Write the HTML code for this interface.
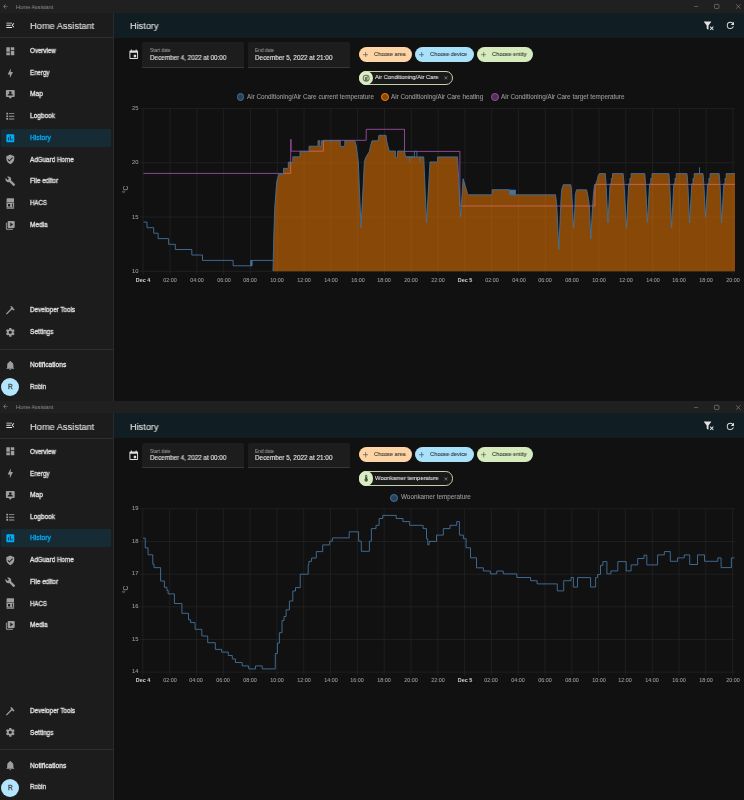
<!DOCTYPE html>
<html><head><meta charset="utf-8"><style>
html,body{margin:0;padding:0;background:#111111;width:744px;height:800px;overflow:hidden}
.panel{position:absolute;left:0;width:744px;height:401px;overflow:hidden}
.sb{position:absolute;left:0;top:12.5px;width:113px;height:389px;background:#1c1c1c}
.t{position:absolute;white-space:nowrap;font-family:"Liberation Sans",sans-serif;will-change:transform}
</style></head><body>
<div class="panel" style="top:0px">
<div style="position:absolute;left:114px;top:37.8px;width:630px;height:363px;background:#111111"></div>
<div class="sb"></div>
<svg style="position:absolute;left:4.5px;top:19.6px;width:10.6px;height:10.6px" viewBox="0 0 24 24"><path fill="#e1e1e1" d="M21,15.61L19.59,17L14.58,12L19.59,7L21,8.39L17.44,12L21,15.61M3,6H16V8H3V6M3,13V11H13V13H3M3,18V16H16V18H3Z"/></svg>
<div class="t" style="left:29.9px;top:21.15px;font-size:9.500px;line-height:9.500px;color:#e1e1e1;font-weight:400;-webkit-text-stroke:0.1px #e1e1e1;transform:scaleX(0.9742);transform-origin:0 50%">Home Assistant</div>
<div style="position:absolute;left:0;top:37.3px;width:113px;height:1px;background:#2e2e2e"></div>
<div style="position:absolute;left:0.8px;top:128.7px;width:109.8px;height:18px;border-radius:2px;background:#172b34"></div>
<svg style="position:absolute;left:4.9px;top:45.900000000000006px;width:10.6px;height:10.6px" viewBox="0 0 24 24"><path fill="#9e9e9e" d="M13,3V9H21V3M13,21H21V11H13M3,21H11V15H3M3,13H11V3H3V13Z"/></svg>
<div class="t" style="left:29.9px;top:48.10px;font-size:6.600px;line-height:6.600px;color:#e1e1e1;font-weight:400;-webkit-text-stroke:0.3px #e1e1e1;transform:scaleX(0.9380);transform-origin:0 50%">Overview</div>
<svg style="position:absolute;left:4.9px;top:67.8px;width:10.6px;height:10.6px" viewBox="0 0 24 24"><path fill="#9e9e9e" d="M11 15H6L13 1V9H18L11 23V15Z"/></svg>
<div class="t" style="left:29.9px;top:70.00px;font-size:6.600px;line-height:6.600px;color:#e1e1e1;font-weight:400;-webkit-text-stroke:0.3px #e1e1e1;transform:scaleX(0.9324);transform-origin:0 50%">Energy</div>
<svg style="position:absolute;left:4.9px;top:89.2px;width:10.6px;height:10.6px" viewBox="0 0 24 24"><path fill="#9e9e9e" d="M20,2H4A2,2 0 0,0 2,4V16A2,2 0 0,0 4,18H8L12,22L16,18H20A2,2 0 0,0 22,16V4A2,2 0 0,0 20,2M12,5A3,3 0 0,1 15,8A3,3 0 0,1 12,11A3,3 0 0,1 9,8A3,3 0 0,1 12,5M18,15H6V14C6,12 10,11 12,11C14,11 18,12 18,14V15Z"/></svg>
<div class="t" style="left:29.9px;top:91.40px;font-size:6.600px;line-height:6.600px;color:#e1e1e1;font-weight:400;-webkit-text-stroke:0.3px #e1e1e1;transform:scaleX(1.0125);transform-origin:0 50%">Map</div>
<svg style="position:absolute;left:4.9px;top:111.0px;width:10.6px;height:10.6px" viewBox="0 0 24 24"><path fill="#9e9e9e" d="M3,4H7V8H3V4M3,10H7V14H3V10M3,16H7V20H3V16M9,5V7H21V5H9M9,19H21V17H9V19M9,13H21V11H9V13Z"/></svg>
<div class="t" style="left:29.9px;top:113.10px;font-size:6.600px;line-height:6.600px;color:#e1e1e1;font-weight:400;-webkit-text-stroke:0.3px #e1e1e1;transform:scaleX(0.9872);transform-origin:0 50%">Logbook</div>
<svg style="position:absolute;left:4.9px;top:132.5px;width:10.6px;height:10.6px" viewBox="0 0 24 24"><path fill="#03a9f4" d="M19 3H5C3.9 3 3 3.9 3 5V19C3 20.1 3.9 21 5 21H19C20.1 21 21 20.1 21 19V5C21 3.9 20.1 3 19 3M9 17H7V10H9V17M13 17H11V7H13V17M17 17H15V13H17V17Z"/></svg>
<div class="t" style="left:29.9px;top:134.70px;font-size:6.600px;line-height:6.600px;color:#03a9f4;font-weight:400;-webkit-text-stroke:0.3px #03a9f4;transform:scaleX(1.0129);transform-origin:0 50%">History</div>
<svg style="position:absolute;left:4.9px;top:154.39999999999998px;width:10.6px;height:10.6px" viewBox="0 0 24 24"><path fill="#9e9e9e" d="M10,17L6,13L7.41,11.59L10,14.17L16.59,7.58L18,9M12,1L3,5V11C3,16.55 6.84,21.74 12,23C17.16,21.74 21,16.55 21,11V5L12,1Z"/></svg>
<div class="t" style="left:29.9px;top:156.60px;font-size:6.600px;line-height:6.600px;color:#e1e1e1;font-weight:400;-webkit-text-stroke:0.3px #e1e1e1;transform:scaleX(0.9530);transform-origin:0 50%">AdGuard Home</div>
<svg style="position:absolute;left:4.9px;top:176.1px;width:10.6px;height:10.6px" viewBox="0 0 24 24"><path fill="#9e9e9e" d="M22.7,19L13.6,9.9C14.5,7.6 14,4.9 12.1,3C10.1,1 7.1,0.6 4.7,1.7L9,6L6,9L1.6,4.7C0.4,7.1 0.9,10.1 2.9,12.1C4.8,14 7.5,14.5 9.8,13.6L18.9,22.7C19.3,23.1 19.9,23.1 20.3,22.7L22.6,20.4C23.1,20 23.1,19.3 22.7,19Z"/></svg>
<div class="t" style="left:29.9px;top:178.30px;font-size:6.600px;line-height:6.600px;color:#e1e1e1;font-weight:400;-webkit-text-stroke:0.3px #e1e1e1;transform:scaleX(0.9766);transform-origin:0 50%">File editor</div>
<svg style="position:absolute;left:0;top:197.75px;width:20px;height:12px" viewBox="0 0 20 12"><path fill="#9e9e9e" d="M6.7,0.2H13.9L14.1,4.6V10.7H6.5V4.6Z"/><path fill="#1c1c1c" d="M6.5,4.5H14.1V4.9H6.5Z M8.1,5.9H10.1V8.5H8.1Z M12.1,5.7H13V8.8H12.1Z M6.5,8.9H14.1V9.3H6.5Z"/><path fill="#5a5a5a" d="M7.2,9.6H8.4V10.3H7.2Z M9.2,9.6H11V10.3H9.2Z M12.6,9.6H13.6V10.3H12.6Z"/></svg>
<div class="t" style="left:29.9px;top:200.00px;font-size:6.600px;line-height:6.600px;color:#e1e1e1;font-weight:400;-webkit-text-stroke:0.3px #e1e1e1;transform:scaleX(0.9161);transform-origin:0 50%">HACS</div>
<svg style="position:absolute;left:4.9px;top:219.5px;width:10.6px;height:10.6px" viewBox="0 0 24 24"><path fill="#9e9e9e" d="M4,6H2V20A2,2 0 0,0 4,22H18V20H4V6M20,2H8A2,2 0 0,0 6,4V16A2,2 0 0,0 8,18H20A2,2 0 0,0 22,16V4A2,2 0 0,0 20,2M12,14.5V5.5L18,10L12,14.5Z"/></svg>
<div class="t" style="left:29.9px;top:221.70px;font-size:6.600px;line-height:6.600px;color:#e1e1e1;font-weight:400;-webkit-text-stroke:0.3px #e1e1e1;transform:scaleX(0.9790);transform-origin:0 50%">Media</div>
<svg style="position:absolute;left:4.9px;top:305.0px;width:10.6px;height:10.6px" viewBox="0 0 24 24"><path fill="#9e9e9e" d="M2 19.63L13.43 8.2L12.72 7.5L14.14 6.07L12 3.89C13.2 2.7 15.09 2.7 16.27 3.89L19.87 7.5L18.45 8.91H21.29L22 9.62L18.45 13.21L17.74 12.5V9.62L16.27 11.04L15.56 10.33L4.13 21.76L2 19.63Z"/></svg>
<div class="t" style="left:29.9px;top:307.20px;font-size:6.600px;line-height:6.600px;color:#e1e1e1;font-weight:400;-webkit-text-stroke:0.3px #e1e1e1;transform:scaleX(0.9575);transform-origin:0 50%">Developer Tools</div>
<svg style="position:absolute;left:4.9px;top:326.8px;width:10.6px;height:10.6px" viewBox="0 0 24 24"><path fill="#9e9e9e" d="M12,15.5A3.5,3.5 0 0,1 8.5,12A3.5,3.5 0 0,1 12,8.5A3.5,3.5 0 0,1 15.5,12A3.5,3.5 0 0,1 12,15.5M19.43,12.97C19.47,12.65 19.5,12.33 19.5,12C19.5,11.67 19.47,11.34 19.43,11L21.54,9.37C21.73,9.22 21.78,8.950 21.66,8.73L19.66,5.27C19.54,5.05 19.27,4.96 19.05,5.05L16.56,6.05C16.04,5.66 15.5,5.32 14.87,5.07L14.5,2.42C14.46,2.18 14.25,2 14,2H10C9.75,2 9.54,2.18 9.5,2.42L9.13,5.07C8.5,5.32 7.960,5.66 7.44,6.05L4.95,5.05C4.73,4.96 4.46,5.05 4.34,5.27L2.34,8.73C2.21,8.95 2.27,9.22 2.46,9.37L4.57,11C4.53,11.34 4.5,11.67 4.5,12C4.5,12.33 4.53,12.65 4.57,12.97L2.46,14.63C2.27,14.78 2.21,15.05 2.34,15.27L4.34,18.73C4.46,18.95 4.73,19.03 4.95,18.95L7.44,17.940C7.96,18.34 8.5,18.68 9.13,18.93L9.5,21.58C9.54,21.82 9.75,22 10,22H14C14.25,22 14.46,21.82 14.5,21.58L14.87,18.93C15.5,18.67 16.04,18.34 16.56,17.94L19.05,18.95C19.27,19.03 19.54,18.95 19.66,18.73L21.66,15.27C21.78,15.05 21.73,14.78 21.54,14.63L19.43,12.97Z"/></svg>
<div class="t" style="left:29.9px;top:329.00px;font-size:6.600px;line-height:6.600px;color:#e1e1e1;font-weight:400;-webkit-text-stroke:0.3px #e1e1e1;transform:scaleX(0.9812);transform-origin:0 50%">Settings</div>
<div style="position:absolute;left:0;top:348.6px;width:113px;height:1px;background:#2e2e2e"></div>
<svg style="position:absolute;left:4.9px;top:359.8px;width:10.6px;height:10.6px" viewBox="0 0 24 24"><path fill="#9e9e9e" d="M21,19V20H3V19L5,17V11C5,7.9 7.03,5.17 10,4.29C10,4.19 10,4.1 10,4A2,2 0 0,1 12,2A2,2 0 0,1 14,4C14,4.1 14,4.19 14,4.29C16.97,5.17 19,7.9 19,11V17L21,19M14,21A2,2 0 0,1 12,23A2,2 0 0,1 10,21"/></svg>
<div class="t" style="left:29.9px;top:362.40px;font-size:6.600px;line-height:6.600px;color:#e1e1e1;font-weight:400;-webkit-text-stroke:0.3px #e1e1e1;transform:scaleX(1.0098);transform-origin:0 50%">Notifications</div>
<div style="position:absolute;left:1.2px;top:378.1px;width:18px;height:18px;border-radius:50%;background:#b3e5fc"></div>
<div class="t" style="left:8.1px;top:384.10px;font-size:6.600px;line-height:6.600px;color:#3e4c53;font-weight:400;-webkit-text-stroke:0.3px #3e4c53">R</div>
<div class="t" style="left:29.9px;top:383.80px;font-size:6.600px;line-height:6.600px;color:#e1e1e1;font-weight:400;-webkit-text-stroke:0.3px #e1e1e1;transform:scaleX(0.9336);transform-origin:0 50%">Robin</div>
<div style="position:absolute;left:113px;top:12.5px;width:1px;height:388px;background:#2b2b2b"></div>
<div style="position:absolute;left:0;top:0;width:744px;height:12.5px;background:#202020"></div>
<svg style="position:absolute;left:2.3px;top:2.7px;width:7px;height:7px" viewBox="0 0 24 24"><path fill="#8a8a8a" d="M20,11V13H8L13.5,18.5L12.08,19.92L4.16,12L12.08,4.08L13.5,5.5L8,11H20Z"/></svg>
<div class="t" style="left:15.7px;top:4.55px;font-size:5.800px;line-height:5.800px;color:#8f8f8f;font-weight:400;transform:scaleX(0.9207);transform-origin:0 50%">Home Assistant</div>
<svg style="position:absolute;left:690px;top:0;width:54px;height:12px" viewBox="690 0 54 12"><path d="M693.9,6.5H698.3" stroke="#858585" stroke-width="0.55"/><rect x="714.45" y="4.35" width="4.5" height="4.1" rx="0.9" fill="none" stroke="#8e8e8e" stroke-width="0.6"/><path d="M736.1,4.3L740.5,8.7M740.5,4.3L736.1,8.7" stroke="#8e8e8e" stroke-width="0.6"/></svg>
<div style="position:absolute;left:114px;top:12.5px;width:630px;height:25.3px;background:#101e24"></div>
<div class="t" style="left:129.7px;top:21.00px;font-size:9.400px;line-height:9.400px;color:#e1e1e1;font-weight:400;-webkit-text-stroke:0.1px #e1e1e1;transform:scaleX(0.9779);transform-origin:0 50%">History</div>
<svg style="position:absolute;left:702.7px;top:19.8px;width:11px;height:11px" viewBox="0 0 24 24"><path fill="#e1e1e1" d="M14.76,20.83L17.6,18L14.76,15.17L16.17,13.76L19,16.57L21.83,13.76L23.24,15.17L20.43,18L23.24,20.83L21.83,22.24L19,19.4L16.17,22.24L14.76,20.83M12,12V19.88C12.04,20.18 11.94,20.5 11.71,20.71C11.32,21.1 10.69,21.1 10.3,20.71L8.29,18.7C8.06,18.47 7.96,18.16 8,17.87V12H7.97L2.21,4.62C1.87,4.19 1.95,3.56 2.38,3.22C2.57,3.08 2.78,3 3,3H17C17.22,3 17.43,3.08 17.62,3.22C18.05,3.56 18.13,4.19 17.79,4.62L12.03,12H12Z"/></svg>
<svg style="position:absolute;left:724.8px;top:20.3px;width:10.8px;height:10.8px" viewBox="0 0 24 24"><path fill="#e1e1e1" d="M17.65,6.35C16.2,4.9 14.21,4 12,4A8,8 0 0,0 4,12A8,8 0 0,0 12,20C15.73,20 18.84,17.45 19.73,14H17.65C16.83,16.33 14.61,18 12,18A6,6 0 0,1 6,12A6,6 0 0,1 12,6C13.66,6 15.14,6.690 16.22,7.78L13,11H20V4L17.65,6.35Z"/></svg>
<svg style="position:absolute;left:127.8px;top:49.1px;width:11.5px;height:11.5px" viewBox="0 0 24 24"><path fill="#e1e1e1" d="M19,19H5V8H19M16,1V3H8V1H6V3H5C3.89,3 3,3.89 3,5V19A2,2 0 0,0 5,21H19A2,2 0 0,0 21,19V5C21,3.89 20.1,3 19,3H18V1M17,12H12V17H17V12Z"/></svg>
<div style="position:absolute;left:142.3px;top:42px;width:101.89999999999998px;height:25.8px;background:#1d1d1d;border-radius:2px 2px 0 0;border-bottom:0.6px solid #383838;box-sizing:border-box"></div>
<div class="t" style="left:149.8px;top:49.15px;font-size:4.900px;line-height:4.900px;color:#9b9b9b;font-weight:400;-webkit-text-stroke:0.05px #9b9b9b;transform:scaleX(0.9696);transform-origin:0 50%">Start date</div>
<div class="t" style="left:149.8px;top:54.60px;font-size:6.400px;line-height:6.400px;color:#e1e1e1;font-weight:400;-webkit-text-stroke:0.12px #e1e1e1;transform:scaleX(0.9850);transform-origin:0 50%">December 4, 2022 at 00:00</div>
<div style="position:absolute;left:247.8px;top:42px;width:101.80000000000001px;height:25.8px;background:#1d1d1d;border-radius:2px 2px 0 0;border-bottom:0.6px solid #383838;box-sizing:border-box"></div>
<div class="t" style="left:255.3px;top:49.15px;font-size:4.900px;line-height:4.900px;color:#9b9b9b;font-weight:400;-webkit-text-stroke:0.05px #9b9b9b;transform:scaleX(0.9737);transform-origin:0 50%">End date</div>
<div class="t" style="left:255.3px;top:54.60px;font-size:6.400px;line-height:6.400px;color:#e1e1e1;font-weight:400;-webkit-text-stroke:0.12px #e1e1e1">December 5, 2022 at 21:00</div>
<div style="position:absolute;left:358.8px;top:46.9px;width:53.0px;height:14.9px;border-radius:7.45px;background:#fdd4a5"></div>
<svg style="position:absolute;left:362.6px;top:51.6px;width:5.4px;height:5.4px" viewBox="0 0 10 10"><path d="M5,0V10M0,5H10" stroke="rgba(0,0,0,0.55)" stroke-width="1.35"/></svg>
<div class="t" style="left:374.2px;top:51.50px;font-size:5.800px;line-height:5.800px;color:rgba(0,0,0,0.72);font-weight:400;-webkit-text-stroke:0.12px rgba(0,0,0,0.72);transform:scaleX(0.9515);transform-origin:0 50%">Choose area</div>
<div style="position:absolute;left:415px;top:46.9px;width:58.60000000000002px;height:14.9px;border-radius:7.45px;background:#a9e0fa"></div>
<svg style="position:absolute;left:418.8px;top:51.6px;width:5.4px;height:5.4px" viewBox="0 0 10 10"><path d="M5,0V10M0,5H10" stroke="rgba(0,0,0,0.55)" stroke-width="1.35"/></svg>
<div class="t" style="left:430.4px;top:51.50px;font-size:5.800px;line-height:5.800px;color:rgba(0,0,0,0.72);font-weight:400;-webkit-text-stroke:0.12px rgba(0,0,0,0.72);transform:scaleX(0.9695);transform-origin:0 50%">Choose device</div>
<div style="position:absolute;left:476.9px;top:46.9px;width:56.39999999999998px;height:14.9px;border-radius:7.45px;background:#d5eabd"></div>
<svg style="position:absolute;left:480.7px;top:51.6px;width:5.4px;height:5.4px" viewBox="0 0 10 10"><path d="M5,0V10M0,5H10" stroke="rgba(0,0,0,0.55)" stroke-width="1.35"/></svg>
<div class="t" style="left:492.29999999999995px;top:51.50px;font-size:5.800px;line-height:5.800px;color:rgba(0,0,0,0.72);font-weight:400;-webkit-text-stroke:0.12px rgba(0,0,0,0.72);transform:scaleX(0.9784);transform-origin:0 50%">Choose entity</div>
<div style="position:absolute;left:358.7px;top:70.9px;width:94px;height:14.4px;border-radius:7.2px;border:1.05px solid #c2d1a8;box-sizing:border-box;background:#1a1a1a"></div>
<div style="position:absolute;left:358.7px;top:70.9px;width:14.4px;height:14.4px;border-radius:50%;background:#d8edc2"></div>
<svg style="position:absolute;left:361.7px;top:73.9px;width:8.4px;height:8.4px" viewBox="0 0 24 24"><path fill="#6e7566" d="M16.95,16.95L14.83,14.83C15.55,14.1 16,13.1 16,12C16,11.26 15.79,10.57 15.43,10L17.6,7.81C18.5,9 19,10.43 19,12C19,13.93 18.22,15.68 16.95,16.95M12,5C13.57,5 15,5.5 16.19,6.4L14,8.56C13.43,8.2 12.74,8 12,8A4,4 0 0,0 8,12C8,13.1 8.45,14.1 9.17,14.83L7.05,16.95C5.78,15.68 5,13.930 5,12A7,7 0 0,1 12,5M12,2A10,10 0 0,0 2,12A10,10 0 0,0 12,22A10,10 0 0,0 22,12A10,10 0 0,0 12,2Z"/></svg>
<div class="t" style="left:375.2px;top:75.45px;font-size:5.900px;line-height:5.900px;color:#e1e1e1;font-weight:400;-webkit-text-stroke:0.08px #e1e1e1;transform:scaleX(0.9795);transform-origin:0 50%">Air Conditioning/Air Care</div>
<svg style="position:absolute;left:443.2px;top:75.4px;width:5.8px;height:5.8px" viewBox="0 0 24 24"><path fill="#9b9b9b" d="M19,6.41L17.59,5L12,10.59L6.41,5L5,6.41L10.59,12L5,17.59L6.41,19L12,13.41L17.59,19L19,17.59L13.41,12L19,6.41Z"/></svg>
<div style="position:absolute;left:236.5px;top:93.19999999999999px;width:7.8px;height:7.8px;border-radius:50%;box-sizing:border-box;border:1.3px solid #44739e;background:rgba(68,115,158,0.5)"></div>
<div class="t" style="left:246.7px;top:93.83px;font-size:6.330px;line-height:6.330px;color:#9b9b9b;font-weight:400;-webkit-text-stroke:0.08px #9b9b9b">Air Conditioning/Air Care current temperature</div>
<div style="position:absolute;left:381.1px;top:93.19999999999999px;width:7.8px;height:7.8px;border-radius:50%;box-sizing:border-box;border:1.3px solid #ff8100;background:rgba(255,129,0,0.5)"></div>
<div class="t" style="left:391.3px;top:93.83px;font-size:6.330px;line-height:6.330px;color:#9b9b9b;font-weight:400;-webkit-text-stroke:0.08px #9b9b9b">Air Conditioning/Air Care heating</div>
<div style="position:absolute;left:491.0px;top:93.19999999999999px;width:7.8px;height:7.8px;border-radius:50%;box-sizing:border-box;border:1.3px solid #984ea3;background:rgba(152,78,163,0.5)"></div>
<div class="t" style="left:501.2px;top:93.83px;font-size:6.330px;line-height:6.330px;color:#9b9b9b;font-weight:400;-webkit-text-stroke:0.08px #9b9b9b">Air Conditioning/Air Care target temperature</div>
<svg style="position:absolute;left:0;top:0;width:744px;height:400px" viewBox="0 0 744 400"><path d="M140,108.45H735" stroke="#252525" stroke-width="0.7"/>
<path d="M140,162.75H735" stroke="#252525" stroke-width="0.7"/>
<path d="M140,217.05H735" stroke="#252525" stroke-width="0.7"/>
<path d="M140,271.35H735" stroke="#252525" stroke-width="0.7"/>
<path d="M143.20,108.45V274.75" stroke="#252525" stroke-width="0.7"/>
<path d="M170.01,108.45V274.75" stroke="#252525" stroke-width="0.7"/>
<path d="M196.82,108.45V274.75" stroke="#252525" stroke-width="0.7"/>
<path d="M223.63,108.45V274.75" stroke="#252525" stroke-width="0.7"/>
<path d="M250.44,108.45V274.75" stroke="#252525" stroke-width="0.7"/>
<path d="M277.25,108.45V274.75" stroke="#252525" stroke-width="0.7"/>
<path d="M304.06,108.45V274.75" stroke="#252525" stroke-width="0.7"/>
<path d="M330.87,108.45V274.75" stroke="#252525" stroke-width="0.7"/>
<path d="M357.68,108.45V274.75" stroke="#252525" stroke-width="0.7"/>
<path d="M384.49,108.45V274.75" stroke="#252525" stroke-width="0.7"/>
<path d="M411.30,108.45V274.75" stroke="#252525" stroke-width="0.7"/>
<path d="M438.11,108.45V274.75" stroke="#252525" stroke-width="0.7"/>
<path d="M464.92,108.45V274.75" stroke="#252525" stroke-width="0.7"/>
<path d="M491.73,108.45V274.75" stroke="#252525" stroke-width="0.7"/>
<path d="M518.54,108.45V274.75" stroke="#252525" stroke-width="0.7"/>
<path d="M545.35,108.45V274.75" stroke="#252525" stroke-width="0.7"/>
<path d="M572.16,108.45V274.75" stroke="#252525" stroke-width="0.7"/>
<path d="M598.97,108.45V274.75" stroke="#252525" stroke-width="0.7"/>
<path d="M625.78,108.45V274.75" stroke="#252525" stroke-width="0.7"/>
<path d="M652.59,108.45V274.75" stroke="#252525" stroke-width="0.7"/>
<path d="M679.40,108.45V274.75" stroke="#252525" stroke-width="0.7"/>
<path d="M706.21,108.45V274.75" stroke="#252525" stroke-width="0.7"/>
<path d="M733.02,108.45V274.75" stroke="#252525" stroke-width="0.7"/><path d="M143.5,173.4H290.7V139.4H291.1V151.2H323.4V140.3H366.2V129.3H404.5V151.4H459.9V206H595V184.4H735" fill="none" stroke="#984ea3" stroke-width="0.9"/><path d="M273,271L273.8,236L274.8,207L275.8,193.6L276.7,182L278.7,174.3H283.5V168.4H288.3V162.2H292.8V156.8H300V151.4H309V146.2H318V140.7H319.8V146.4H321.4V140.7H340.3V146.4H344.8V140.7H354.8L356.2,145.6L356.9,150.4L358.3,161.5L361,227.5L364.4,161.5L365.8,157.3L369.3,151.8L370.6,145.6L372,140.8H378.2L378.9,135.3H386L386.5,140.1L387.8,145.6L389.2,151.1H395.4V157.3H397.5V151.1H404.4L405.6,156.9H423.75L426.5,222.5L430,161.9H437.5V156.9H457.5L460.6,216.9L463.1,178.75L465,185L467.5,193.75L468.5,194.8H492.1V189.7H509.7V194.8H555.6L556.8,206.1L558.8,249.5L560.7,206.1L561.3,194.8L561.8,189.2L563.3,184.7H570.8L571.4,189.2L572.5,206.1L573.6,228.1L575,206.1L575.3,194.8L576.5,189.8H586.6L587.7,194.8L589.4,206.1L590.8,238.8L592.6,206.1L593.4,194.8L594.5,184.7H595.6L597.3,179.6L598.4,175.1L599.5,173.6H605.3L606.1,183.8L607.9,222.6L610.1,183.8H611.3V178.3H612.5V173.6H623.2L624.0,183.8L626.5,228.2L628.7,183.8H629.9V178.3H631.1V173.6H644.8L645.6,183.8L647.4,222.3L649.6,183.8H650.8V178.3H652.0V173.6H668.9L669.7,183.8L671.6,227.6L673.8,183.8H675.0V178.3H676.2V173.6H687.0L687.8,183.8L689.6,222.9L691.8,183.8H693.0V178.3H694.2V173.6H703.0L703.8,183.8L705.5,217.0L707.7,183.8H708.9V178.3H710.1V173.6H719.2L720.0,183.8L721.6,222.6L723.8,183.8H725.0V178.3H726.2V173.6H735V271.3H273Z" fill="rgba(255,129,0,0.5)"/><path d="M143.6,222.1H147V227.7H153.7V233.2H158.1V238.6H168.6V244.3H175.3V249.5H191.8V255H202.5V260.4H233.1V265.8H250.9V260.4H273" fill="none" stroke="#44739e" stroke-width="0.9"/><path d="M273,271L273.8,236L274.8,207L275.8,193.6L276.7,182L278.7,174.3H283.5V168.4H288.3V162.2H292.8V156.8H300V151.4H309V146.2H318V140.7H319.8V146.4H321.4V140.7H340.3V146.4H344.8V140.7H354.8L356.2,145.6L356.9,150.4L358.3,161.5L361,227.5L364.4,161.5L365.8,157.3L369.3,151.8L370.6,145.6L372,140.8H378.2L378.9,135.3H386L386.5,140.1L387.8,145.6L389.2,151.1H395.4V157.3H397.5V151.1H404.4L405.6,156.9H423.75L426.5,222.5L430,161.9H437.5V156.9H457.5L460.6,216.9L463.1,178.75L465,185L467.5,193.75L468.5,194.8H492.1V189.7H509.7V194.8H555.6L556.8,206.1L558.8,249.5L560.7,206.1L561.3,194.8L561.8,189.2L563.3,184.7H570.8L571.4,189.2L572.5,206.1L573.6,228.1L575,206.1L575.3,194.8L576.5,189.8H586.6L587.7,194.8L589.4,206.1L590.8,238.8L592.6,206.1L593.4,194.8L594.5,184.7H595.6L597.3,179.6L598.4,175.1L599.5,173.6H605.3L606.1,183.8L607.9,222.6L610.1,183.8H611.3V178.3H612.5V173.6H623.2L624.0,183.8L626.5,228.2L628.7,183.8H629.9V178.3H631.1V173.6H644.8L645.6,183.8L647.4,222.3L649.6,183.8H650.8V178.3H652.0V173.6H668.9L669.7,183.8L671.6,227.6L673.8,183.8H675.0V178.3H676.2V173.6H687.0L687.8,183.8L689.6,222.9L691.8,183.8H693.0V178.3H694.2V173.6H703.0L703.8,183.8L705.5,217.0L707.7,183.8H708.9V178.3H710.1V173.6H719.2L720.0,183.8L721.6,222.6L723.8,183.8H725.0V178.3H726.2V173.6H735" fill="none" stroke="#44739e" stroke-width="0.9"/><rect x="509.7" y="189.7" width="6.2" height="5.1" fill="#44739e"/><path d="M406.25,156.9H414.4V151.25H416.9V156.9" fill="none" stroke="#44739e" stroke-width="0.9"/><path d="M409.7,156.9V161.9M420.2,156.9V161.9M699.5,173.6V167.4M252,260.4V265.8H250.9" fill="none" stroke="#44739e" stroke-width="0.9"/><rect x="250.4" y="260.2" width="1.8" height="5.6" fill="#44739e"/></svg><div class="t" style="left:110px;width:28.5px;text-align:right;top:106.15px;font-size:5.8px;line-height:5.8px;color:#9b9b9b;-webkit-text-stroke:0.08px #9b9b9b">25</div>
<div class="t" style="left:110px;width:28.5px;text-align:right;top:160.45px;font-size:5.8px;line-height:5.8px;color:#9b9b9b;-webkit-text-stroke:0.08px #9b9b9b">20</div>
<div class="t" style="left:110px;width:28.5px;text-align:right;top:214.75px;font-size:5.8px;line-height:5.8px;color:#9b9b9b;-webkit-text-stroke:0.08px #9b9b9b">15</div>
<div class="t" style="left:110px;width:28.5px;text-align:right;top:269.05px;font-size:5.8px;line-height:5.8px;color:#9b9b9b;-webkit-text-stroke:0.08px #9b9b9b">10</div>
<div class="t" style="left:128.20px;width:30px;text-align:center;top:277.65px;font-size:5.4px;line-height:5.6px;-webkit-text-stroke:0.08px #9b9b9b;color:#cfcfcf;font-weight:700">Dec 4</div>
<div class="t" style="left:155.01px;width:30px;text-align:center;top:277.65px;font-size:5.4px;line-height:5.6px;-webkit-text-stroke:0.08px #9b9b9b;color:#9b9b9b;font-weight:400">02:00</div>
<div class="t" style="left:181.82px;width:30px;text-align:center;top:277.65px;font-size:5.4px;line-height:5.6px;-webkit-text-stroke:0.08px #9b9b9b;color:#9b9b9b;font-weight:400">04:00</div>
<div class="t" style="left:208.63px;width:30px;text-align:center;top:277.65px;font-size:5.4px;line-height:5.6px;-webkit-text-stroke:0.08px #9b9b9b;color:#9b9b9b;font-weight:400">06:00</div>
<div class="t" style="left:235.44px;width:30px;text-align:center;top:277.65px;font-size:5.4px;line-height:5.6px;-webkit-text-stroke:0.08px #9b9b9b;color:#9b9b9b;font-weight:400">08:00</div>
<div class="t" style="left:262.25px;width:30px;text-align:center;top:277.65px;font-size:5.4px;line-height:5.6px;-webkit-text-stroke:0.08px #9b9b9b;color:#9b9b9b;font-weight:400">10:00</div>
<div class="t" style="left:289.06px;width:30px;text-align:center;top:277.65px;font-size:5.4px;line-height:5.6px;-webkit-text-stroke:0.08px #9b9b9b;color:#9b9b9b;font-weight:400">12:00</div>
<div class="t" style="left:315.87px;width:30px;text-align:center;top:277.65px;font-size:5.4px;line-height:5.6px;-webkit-text-stroke:0.08px #9b9b9b;color:#9b9b9b;font-weight:400">14:00</div>
<div class="t" style="left:342.68px;width:30px;text-align:center;top:277.65px;font-size:5.4px;line-height:5.6px;-webkit-text-stroke:0.08px #9b9b9b;color:#9b9b9b;font-weight:400">16:00</div>
<div class="t" style="left:369.49px;width:30px;text-align:center;top:277.65px;font-size:5.4px;line-height:5.6px;-webkit-text-stroke:0.08px #9b9b9b;color:#9b9b9b;font-weight:400">18:00</div>
<div class="t" style="left:396.30px;width:30px;text-align:center;top:277.65px;font-size:5.4px;line-height:5.6px;-webkit-text-stroke:0.08px #9b9b9b;color:#9b9b9b;font-weight:400">20:00</div>
<div class="t" style="left:423.11px;width:30px;text-align:center;top:277.65px;font-size:5.4px;line-height:5.6px;-webkit-text-stroke:0.08px #9b9b9b;color:#9b9b9b;font-weight:400">22:00</div>
<div class="t" style="left:449.92px;width:30px;text-align:center;top:277.65px;font-size:5.4px;line-height:5.6px;-webkit-text-stroke:0.08px #9b9b9b;color:#cfcfcf;font-weight:700">Dec 5</div>
<div class="t" style="left:476.73px;width:30px;text-align:center;top:277.65px;font-size:5.4px;line-height:5.6px;-webkit-text-stroke:0.08px #9b9b9b;color:#9b9b9b;font-weight:400">02:00</div>
<div class="t" style="left:503.54px;width:30px;text-align:center;top:277.65px;font-size:5.4px;line-height:5.6px;-webkit-text-stroke:0.08px #9b9b9b;color:#9b9b9b;font-weight:400">04:00</div>
<div class="t" style="left:530.35px;width:30px;text-align:center;top:277.65px;font-size:5.4px;line-height:5.6px;-webkit-text-stroke:0.08px #9b9b9b;color:#9b9b9b;font-weight:400">06:00</div>
<div class="t" style="left:557.16px;width:30px;text-align:center;top:277.65px;font-size:5.4px;line-height:5.6px;-webkit-text-stroke:0.08px #9b9b9b;color:#9b9b9b;font-weight:400">08:00</div>
<div class="t" style="left:583.97px;width:30px;text-align:center;top:277.65px;font-size:5.4px;line-height:5.6px;-webkit-text-stroke:0.08px #9b9b9b;color:#9b9b9b;font-weight:400">10:00</div>
<div class="t" style="left:610.78px;width:30px;text-align:center;top:277.65px;font-size:5.4px;line-height:5.6px;-webkit-text-stroke:0.08px #9b9b9b;color:#9b9b9b;font-weight:400">12:00</div>
<div class="t" style="left:637.59px;width:30px;text-align:center;top:277.65px;font-size:5.4px;line-height:5.6px;-webkit-text-stroke:0.08px #9b9b9b;color:#9b9b9b;font-weight:400">14:00</div>
<div class="t" style="left:664.40px;width:30px;text-align:center;top:277.65px;font-size:5.4px;line-height:5.6px;-webkit-text-stroke:0.08px #9b9b9b;color:#9b9b9b;font-weight:400">16:00</div>
<div class="t" style="left:691.21px;width:30px;text-align:center;top:277.65px;font-size:5.4px;line-height:5.6px;-webkit-text-stroke:0.08px #9b9b9b;color:#9b9b9b;font-weight:400">18:00</div>
<div class="t" style="left:718.02px;width:30px;text-align:center;top:277.65px;font-size:5.4px;line-height:5.6px;-webkit-text-stroke:0.08px #9b9b9b;color:#9b9b9b;font-weight:400">20:00</div>
<div class="t" style="left:122.6px;top:193.10px;font-size:6.4px;line-height:6.4px;color:#a0a0a0;-webkit-text-stroke:0.1px #a0a0a0;transform:rotate(-90deg);transform-origin:0 0">°C</div>
</div>
<div class="panel" style="top:400.6px">
<div style="position:absolute;left:114px;top:37.8px;width:630px;height:363px;background:#111111"></div>
<div class="sb"></div>
<svg style="position:absolute;left:4.5px;top:19.6px;width:10.6px;height:10.6px" viewBox="0 0 24 24"><path fill="#e1e1e1" d="M21,15.61L19.59,17L14.58,12L19.59,7L21,8.39L17.44,12L21,15.61M3,6H16V8H3V6M3,13V11H13V13H3M3,18V16H16V18H3Z"/></svg>
<div class="t" style="left:29.9px;top:21.15px;font-size:9.500px;line-height:9.500px;color:#e1e1e1;font-weight:400;-webkit-text-stroke:0.1px #e1e1e1;transform:scaleX(0.9742);transform-origin:0 50%">Home Assistant</div>
<div style="position:absolute;left:0;top:37.3px;width:113px;height:1px;background:#2e2e2e"></div>
<div style="position:absolute;left:0.8px;top:128.7px;width:109.8px;height:18px;border-radius:2px;background:#172b34"></div>
<svg style="position:absolute;left:4.9px;top:45.900000000000006px;width:10.6px;height:10.6px" viewBox="0 0 24 24"><path fill="#9e9e9e" d="M13,3V9H21V3M13,21H21V11H13M3,21H11V15H3M3,13H11V3H3V13Z"/></svg>
<div class="t" style="left:29.9px;top:48.10px;font-size:6.600px;line-height:6.600px;color:#e1e1e1;font-weight:400;-webkit-text-stroke:0.3px #e1e1e1;transform:scaleX(0.9380);transform-origin:0 50%">Overview</div>
<svg style="position:absolute;left:4.9px;top:67.8px;width:10.6px;height:10.6px" viewBox="0 0 24 24"><path fill="#9e9e9e" d="M11 15H6L13 1V9H18L11 23V15Z"/></svg>
<div class="t" style="left:29.9px;top:70.00px;font-size:6.600px;line-height:6.600px;color:#e1e1e1;font-weight:400;-webkit-text-stroke:0.3px #e1e1e1;transform:scaleX(0.9324);transform-origin:0 50%">Energy</div>
<svg style="position:absolute;left:4.9px;top:89.2px;width:10.6px;height:10.6px" viewBox="0 0 24 24"><path fill="#9e9e9e" d="M20,2H4A2,2 0 0,0 2,4V16A2,2 0 0,0 4,18H8L12,22L16,18H20A2,2 0 0,0 22,16V4A2,2 0 0,0 20,2M12,5A3,3 0 0,1 15,8A3,3 0 0,1 12,11A3,3 0 0,1 9,8A3,3 0 0,1 12,5M18,15H6V14C6,12 10,11 12,11C14,11 18,12 18,14V15Z"/></svg>
<div class="t" style="left:29.9px;top:91.40px;font-size:6.600px;line-height:6.600px;color:#e1e1e1;font-weight:400;-webkit-text-stroke:0.3px #e1e1e1;transform:scaleX(1.0125);transform-origin:0 50%">Map</div>
<svg style="position:absolute;left:4.9px;top:111.0px;width:10.6px;height:10.6px" viewBox="0 0 24 24"><path fill="#9e9e9e" d="M3,4H7V8H3V4M3,10H7V14H3V10M3,16H7V20H3V16M9,5V7H21V5H9M9,19H21V17H9V19M9,13H21V11H9V13Z"/></svg>
<div class="t" style="left:29.9px;top:113.10px;font-size:6.600px;line-height:6.600px;color:#e1e1e1;font-weight:400;-webkit-text-stroke:0.3px #e1e1e1;transform:scaleX(0.9872);transform-origin:0 50%">Logbook</div>
<svg style="position:absolute;left:4.9px;top:132.5px;width:10.6px;height:10.6px" viewBox="0 0 24 24"><path fill="#03a9f4" d="M19 3H5C3.9 3 3 3.9 3 5V19C3 20.1 3.9 21 5 21H19C20.1 21 21 20.1 21 19V5C21 3.9 20.1 3 19 3M9 17H7V10H9V17M13 17H11V7H13V17M17 17H15V13H17V17Z"/></svg>
<div class="t" style="left:29.9px;top:134.70px;font-size:6.600px;line-height:6.600px;color:#03a9f4;font-weight:400;-webkit-text-stroke:0.3px #03a9f4;transform:scaleX(1.0129);transform-origin:0 50%">History</div>
<svg style="position:absolute;left:4.9px;top:154.39999999999998px;width:10.6px;height:10.6px" viewBox="0 0 24 24"><path fill="#9e9e9e" d="M10,17L6,13L7.41,11.59L10,14.17L16.59,7.58L18,9M12,1L3,5V11C3,16.55 6.84,21.74 12,23C17.16,21.74 21,16.55 21,11V5L12,1Z"/></svg>
<div class="t" style="left:29.9px;top:156.60px;font-size:6.600px;line-height:6.600px;color:#e1e1e1;font-weight:400;-webkit-text-stroke:0.3px #e1e1e1;transform:scaleX(0.9530);transform-origin:0 50%">AdGuard Home</div>
<svg style="position:absolute;left:4.9px;top:176.1px;width:10.6px;height:10.6px" viewBox="0 0 24 24"><path fill="#9e9e9e" d="M22.7,19L13.6,9.9C14.5,7.6 14,4.9 12.1,3C10.1,1 7.1,0.6 4.7,1.7L9,6L6,9L1.6,4.7C0.4,7.1 0.9,10.1 2.9,12.1C4.8,14 7.5,14.5 9.8,13.6L18.9,22.7C19.3,23.1 19.9,23.1 20.3,22.7L22.6,20.4C23.1,20 23.1,19.3 22.7,19Z"/></svg>
<div class="t" style="left:29.9px;top:178.30px;font-size:6.600px;line-height:6.600px;color:#e1e1e1;font-weight:400;-webkit-text-stroke:0.3px #e1e1e1;transform:scaleX(0.9766);transform-origin:0 50%">File editor</div>
<svg style="position:absolute;left:0;top:197.75px;width:20px;height:12px" viewBox="0 0 20 12"><path fill="#9e9e9e" d="M6.7,0.2H13.9L14.1,4.6V10.7H6.5V4.6Z"/><path fill="#1c1c1c" d="M6.5,4.5H14.1V4.9H6.5Z M8.1,5.9H10.1V8.5H8.1Z M12.1,5.7H13V8.8H12.1Z M6.5,8.9H14.1V9.3H6.5Z"/><path fill="#5a5a5a" d="M7.2,9.6H8.4V10.3H7.2Z M9.2,9.6H11V10.3H9.2Z M12.6,9.6H13.6V10.3H12.6Z"/></svg>
<div class="t" style="left:29.9px;top:200.00px;font-size:6.600px;line-height:6.600px;color:#e1e1e1;font-weight:400;-webkit-text-stroke:0.3px #e1e1e1;transform:scaleX(0.9161);transform-origin:0 50%">HACS</div>
<svg style="position:absolute;left:4.9px;top:219.5px;width:10.6px;height:10.6px" viewBox="0 0 24 24"><path fill="#9e9e9e" d="M4,6H2V20A2,2 0 0,0 4,22H18V20H4V6M20,2H8A2,2 0 0,0 6,4V16A2,2 0 0,0 8,18H20A2,2 0 0,0 22,16V4A2,2 0 0,0 20,2M12,14.5V5.5L18,10L12,14.5Z"/></svg>
<div class="t" style="left:29.9px;top:221.70px;font-size:6.600px;line-height:6.600px;color:#e1e1e1;font-weight:400;-webkit-text-stroke:0.3px #e1e1e1;transform:scaleX(0.9790);transform-origin:0 50%">Media</div>
<svg style="position:absolute;left:4.9px;top:305.0px;width:10.6px;height:10.6px" viewBox="0 0 24 24"><path fill="#9e9e9e" d="M2 19.63L13.43 8.2L12.72 7.5L14.14 6.07L12 3.89C13.2 2.7 15.09 2.7 16.27 3.89L19.87 7.5L18.45 8.91H21.29L22 9.62L18.45 13.21L17.74 12.5V9.62L16.27 11.04L15.56 10.33L4.13 21.76L2 19.63Z"/></svg>
<div class="t" style="left:29.9px;top:307.20px;font-size:6.600px;line-height:6.600px;color:#e1e1e1;font-weight:400;-webkit-text-stroke:0.3px #e1e1e1;transform:scaleX(0.9575);transform-origin:0 50%">Developer Tools</div>
<svg style="position:absolute;left:4.9px;top:326.8px;width:10.6px;height:10.6px" viewBox="0 0 24 24"><path fill="#9e9e9e" d="M12,15.5A3.5,3.5 0 0,1 8.5,12A3.5,3.5 0 0,1 12,8.5A3.5,3.5 0 0,1 15.5,12A3.5,3.5 0 0,1 12,15.5M19.43,12.97C19.47,12.65 19.5,12.33 19.5,12C19.5,11.67 19.47,11.34 19.43,11L21.54,9.37C21.73,9.22 21.78,8.950 21.66,8.73L19.66,5.27C19.54,5.05 19.27,4.96 19.05,5.05L16.56,6.05C16.04,5.66 15.5,5.32 14.87,5.07L14.5,2.42C14.46,2.18 14.25,2 14,2H10C9.75,2 9.54,2.18 9.5,2.42L9.13,5.07C8.5,5.32 7.960,5.66 7.44,6.05L4.95,5.05C4.73,4.96 4.46,5.05 4.34,5.27L2.34,8.73C2.21,8.95 2.27,9.22 2.46,9.37L4.57,11C4.53,11.34 4.5,11.67 4.5,12C4.5,12.33 4.53,12.65 4.57,12.97L2.46,14.63C2.27,14.78 2.21,15.05 2.34,15.27L4.34,18.73C4.46,18.95 4.73,19.03 4.95,18.95L7.44,17.940C7.96,18.34 8.5,18.68 9.13,18.93L9.5,21.58C9.54,21.82 9.75,22 10,22H14C14.25,22 14.46,21.82 14.5,21.58L14.87,18.93C15.5,18.67 16.04,18.34 16.56,17.94L19.05,18.95C19.27,19.03 19.54,18.95 19.66,18.73L21.66,15.27C21.78,15.05 21.73,14.78 21.54,14.63L19.43,12.97Z"/></svg>
<div class="t" style="left:29.9px;top:329.00px;font-size:6.600px;line-height:6.600px;color:#e1e1e1;font-weight:400;-webkit-text-stroke:0.3px #e1e1e1;transform:scaleX(0.9812);transform-origin:0 50%">Settings</div>
<div style="position:absolute;left:0;top:348.6px;width:113px;height:1px;background:#2e2e2e"></div>
<svg style="position:absolute;left:4.9px;top:359.8px;width:10.6px;height:10.6px" viewBox="0 0 24 24"><path fill="#9e9e9e" d="M21,19V20H3V19L5,17V11C5,7.9 7.03,5.17 10,4.29C10,4.19 10,4.1 10,4A2,2 0 0,1 12,2A2,2 0 0,1 14,4C14,4.1 14,4.19 14,4.29C16.97,5.17 19,7.9 19,11V17L21,19M14,21A2,2 0 0,1 12,23A2,2 0 0,1 10,21"/></svg>
<div class="t" style="left:29.9px;top:362.40px;font-size:6.600px;line-height:6.600px;color:#e1e1e1;font-weight:400;-webkit-text-stroke:0.3px #e1e1e1;transform:scaleX(1.0098);transform-origin:0 50%">Notifications</div>
<div style="position:absolute;left:1.2px;top:378.1px;width:18px;height:18px;border-radius:50%;background:#b3e5fc"></div>
<div class="t" style="left:8.1px;top:384.10px;font-size:6.600px;line-height:6.600px;color:#3e4c53;font-weight:400;-webkit-text-stroke:0.3px #3e4c53">R</div>
<div class="t" style="left:29.9px;top:383.80px;font-size:6.600px;line-height:6.600px;color:#e1e1e1;font-weight:400;-webkit-text-stroke:0.3px #e1e1e1;transform:scaleX(0.9336);transform-origin:0 50%">Robin</div>
<div style="position:absolute;left:113px;top:12.5px;width:1px;height:388px;background:#2b2b2b"></div>
<div style="position:absolute;left:0;top:0;width:744px;height:12.5px;background:#202020"></div>
<svg style="position:absolute;left:2.3px;top:2.7px;width:7px;height:7px" viewBox="0 0 24 24"><path fill="#8a8a8a" d="M20,11V13H8L13.5,18.5L12.08,19.92L4.16,12L12.08,4.08L13.5,5.5L8,11H20Z"/></svg>
<div class="t" style="left:15.7px;top:4.55px;font-size:5.800px;line-height:5.800px;color:#8f8f8f;font-weight:400;transform:scaleX(0.9207);transform-origin:0 50%">Home Assistant</div>
<svg style="position:absolute;left:690px;top:0;width:54px;height:12px" viewBox="690 0 54 12"><path d="M693.9,6.5H698.3" stroke="#858585" stroke-width="0.55"/><rect x="714.45" y="4.35" width="4.5" height="4.1" rx="0.9" fill="none" stroke="#8e8e8e" stroke-width="0.6"/><path d="M736.1,4.3L740.5,8.7M740.5,4.3L736.1,8.7" stroke="#8e8e8e" stroke-width="0.6"/></svg>
<div style="position:absolute;left:114px;top:12.5px;width:630px;height:25.3px;background:#101e24"></div>
<div class="t" style="left:129.7px;top:21.00px;font-size:9.400px;line-height:9.400px;color:#e1e1e1;font-weight:400;-webkit-text-stroke:0.1px #e1e1e1;transform:scaleX(0.9779);transform-origin:0 50%">History</div>
<svg style="position:absolute;left:702.7px;top:19.8px;width:11px;height:11px" viewBox="0 0 24 24"><path fill="#e1e1e1" d="M14.76,20.83L17.6,18L14.76,15.17L16.17,13.76L19,16.57L21.83,13.76L23.24,15.17L20.43,18L23.24,20.83L21.83,22.24L19,19.4L16.17,22.24L14.76,20.83M12,12V19.88C12.04,20.18 11.94,20.5 11.71,20.71C11.32,21.1 10.69,21.1 10.3,20.71L8.29,18.7C8.06,18.47 7.96,18.16 8,17.87V12H7.97L2.21,4.62C1.87,4.19 1.95,3.56 2.38,3.22C2.57,3.08 2.78,3 3,3H17C17.22,3 17.43,3.08 17.62,3.22C18.05,3.56 18.13,4.19 17.79,4.62L12.03,12H12Z"/></svg>
<svg style="position:absolute;left:724.8px;top:20.3px;width:10.8px;height:10.8px" viewBox="0 0 24 24"><path fill="#e1e1e1" d="M17.65,6.35C16.2,4.9 14.21,4 12,4A8,8 0 0,0 4,12A8,8 0 0,0 12,20C15.73,20 18.84,17.45 19.73,14H17.65C16.83,16.33 14.61,18 12,18A6,6 0 0,1 6,12A6,6 0 0,1 12,6C13.66,6 15.14,6.690 16.22,7.78L13,11H20V4L17.65,6.35Z"/></svg>
<svg style="position:absolute;left:127.8px;top:49.1px;width:11.5px;height:11.5px" viewBox="0 0 24 24"><path fill="#e1e1e1" d="M19,19H5V8H19M16,1V3H8V1H6V3H5C3.89,3 3,3.89 3,5V19A2,2 0 0,0 5,21H19A2,2 0 0,0 21,19V5C21,3.89 20.1,3 19,3H18V1M17,12H12V17H17V12Z"/></svg>
<div style="position:absolute;left:142.3px;top:42px;width:101.89999999999998px;height:25.8px;background:#1d1d1d;border-radius:2px 2px 0 0;border-bottom:0.6px solid #383838;box-sizing:border-box"></div>
<div class="t" style="left:149.8px;top:49.15px;font-size:4.900px;line-height:4.900px;color:#9b9b9b;font-weight:400;-webkit-text-stroke:0.05px #9b9b9b;transform:scaleX(0.9696);transform-origin:0 50%">Start date</div>
<div class="t" style="left:149.8px;top:54.60px;font-size:6.400px;line-height:6.400px;color:#e1e1e1;font-weight:400;-webkit-text-stroke:0.12px #e1e1e1;transform:scaleX(0.9850);transform-origin:0 50%">December 4, 2022 at 00:00</div>
<div style="position:absolute;left:247.8px;top:42px;width:101.80000000000001px;height:25.8px;background:#1d1d1d;border-radius:2px 2px 0 0;border-bottom:0.6px solid #383838;box-sizing:border-box"></div>
<div class="t" style="left:255.3px;top:49.15px;font-size:4.900px;line-height:4.900px;color:#9b9b9b;font-weight:400;-webkit-text-stroke:0.05px #9b9b9b;transform:scaleX(0.9737);transform-origin:0 50%">End date</div>
<div class="t" style="left:255.3px;top:54.60px;font-size:6.400px;line-height:6.400px;color:#e1e1e1;font-weight:400;-webkit-text-stroke:0.12px #e1e1e1">December 5, 2022 at 21:00</div>
<div style="position:absolute;left:358.8px;top:46.9px;width:53.0px;height:14.9px;border-radius:7.45px;background:#fdd4a5"></div>
<svg style="position:absolute;left:362.6px;top:51.6px;width:5.4px;height:5.4px" viewBox="0 0 10 10"><path d="M5,0V10M0,5H10" stroke="rgba(0,0,0,0.55)" stroke-width="1.35"/></svg>
<div class="t" style="left:374.2px;top:51.50px;font-size:5.800px;line-height:5.800px;color:rgba(0,0,0,0.72);font-weight:400;-webkit-text-stroke:0.12px rgba(0,0,0,0.72);transform:scaleX(0.9515);transform-origin:0 50%">Choose area</div>
<div style="position:absolute;left:415px;top:46.9px;width:58.60000000000002px;height:14.9px;border-radius:7.45px;background:#a9e0fa"></div>
<svg style="position:absolute;left:418.8px;top:51.6px;width:5.4px;height:5.4px" viewBox="0 0 10 10"><path d="M5,0V10M0,5H10" stroke="rgba(0,0,0,0.55)" stroke-width="1.35"/></svg>
<div class="t" style="left:430.4px;top:51.50px;font-size:5.800px;line-height:5.800px;color:rgba(0,0,0,0.72);font-weight:400;-webkit-text-stroke:0.12px rgba(0,0,0,0.72);transform:scaleX(0.9695);transform-origin:0 50%">Choose device</div>
<div style="position:absolute;left:476.9px;top:46.9px;width:56.39999999999998px;height:14.9px;border-radius:7.45px;background:#d5eabd"></div>
<svg style="position:absolute;left:480.7px;top:51.6px;width:5.4px;height:5.4px" viewBox="0 0 10 10"><path d="M5,0V10M0,5H10" stroke="rgba(0,0,0,0.55)" stroke-width="1.35"/></svg>
<div class="t" style="left:492.29999999999995px;top:51.50px;font-size:5.800px;line-height:5.800px;color:rgba(0,0,0,0.72);font-weight:400;-webkit-text-stroke:0.12px rgba(0,0,0,0.72);transform:scaleX(0.9784);transform-origin:0 50%">Choose entity</div>
<div style="position:absolute;left:358.7px;top:70.9px;width:94px;height:14.4px;border-radius:7.2px;border:1.05px solid #c2d1a8;box-sizing:border-box;background:#1a1a1a"></div>
<div style="position:absolute;left:358.7px;top:70.9px;width:14.4px;height:14.4px;border-radius:50%;background:#d8edc2"></div>
<svg style="position:absolute;left:361.6px;top:73.8px;width:8.4px;height:8.4px" viewBox="0 0 24 24"><path fill="#4d5248" d="M15 13V5A3 3 0 0 0 9 5V13A5 5 0 1 0 15 13M12 4A1 1 0 0 1 13 5V8H11V5A1 1 0 0 1 12 4Z"/></svg>
<div class="t" style="left:375.2px;top:75.45px;font-size:5.900px;line-height:5.900px;color:#e1e1e1;font-weight:400;-webkit-text-stroke:0.08px #e1e1e1;transform:scaleX(0.9762);transform-origin:0 50%">Woonkamer temperature</div>
<svg style="position:absolute;left:443.2px;top:75.4px;width:5.8px;height:5.8px" viewBox="0 0 24 24"><path fill="#9b9b9b" d="M19,6.41L17.59,5L12,10.59L6.41,5L5,6.41L10.59,12L5,17.59L6.41,19L12,13.41L17.59,19L19,17.59L13.41,12L19,6.41Z"/></svg>
<div style="position:absolute;left:390.40000000000003px;top:93.19999999999999px;width:7.8px;height:7.8px;border-radius:50%;box-sizing:border-box;border:1.3px solid #44739e;background:rgba(68,115,158,0.5)"></div>
<div class="t" style="left:400.5px;top:93.83px;font-size:6.330px;line-height:6.330px;color:#9b9b9b;font-weight:400;-webkit-text-stroke:0.08px #9b9b9b">Woonkamer temperature</div>
<svg style="position:absolute;left:0;top:0;width:744px;height:400px" viewBox="0 0 744 400"><path d="M140,107.80H735" stroke="#252525" stroke-width="0.7"/>
<path d="M140,140.48H735" stroke="#252525" stroke-width="0.7"/>
<path d="M140,173.16H735" stroke="#252525" stroke-width="0.7"/>
<path d="M140,205.84H735" stroke="#252525" stroke-width="0.7"/>
<path d="M140,238.52H735" stroke="#252525" stroke-width="0.7"/>
<path d="M140,271.20H735" stroke="#252525" stroke-width="0.7"/>
<path d="M142.85,107.79999999999995V274.60" stroke="#252525" stroke-width="0.7"/>
<path d="M169.66,107.79999999999995V274.60" stroke="#252525" stroke-width="0.7"/>
<path d="M196.47,107.79999999999995V274.60" stroke="#252525" stroke-width="0.7"/>
<path d="M223.28,107.79999999999995V274.60" stroke="#252525" stroke-width="0.7"/>
<path d="M250.09,107.79999999999995V274.60" stroke="#252525" stroke-width="0.7"/>
<path d="M276.90,107.79999999999995V274.60" stroke="#252525" stroke-width="0.7"/>
<path d="M303.71,107.79999999999995V274.60" stroke="#252525" stroke-width="0.7"/>
<path d="M330.52,107.79999999999995V274.60" stroke="#252525" stroke-width="0.7"/>
<path d="M357.33,107.79999999999995V274.60" stroke="#252525" stroke-width="0.7"/>
<path d="M384.14,107.79999999999995V274.60" stroke="#252525" stroke-width="0.7"/>
<path d="M410.95,107.79999999999995V274.60" stroke="#252525" stroke-width="0.7"/>
<path d="M437.76,107.79999999999995V274.60" stroke="#252525" stroke-width="0.7"/>
<path d="M464.57,107.79999999999995V274.60" stroke="#252525" stroke-width="0.7"/>
<path d="M491.38,107.79999999999995V274.60" stroke="#252525" stroke-width="0.7"/>
<path d="M518.19,107.79999999999995V274.60" stroke="#252525" stroke-width="0.7"/>
<path d="M545.00,107.79999999999995V274.60" stroke="#252525" stroke-width="0.7"/>
<path d="M571.81,107.79999999999995V274.60" stroke="#252525" stroke-width="0.7"/>
<path d="M598.62,107.79999999999995V274.60" stroke="#252525" stroke-width="0.7"/>
<path d="M625.43,107.79999999999995V274.60" stroke="#252525" stroke-width="0.7"/>
<path d="M652.24,107.79999999999995V274.60" stroke="#252525" stroke-width="0.7"/>
<path d="M679.05,107.79999999999995V274.60" stroke="#252525" stroke-width="0.7"/>
<path d="M705.86,107.79999999999995V274.60" stroke="#252525" stroke-width="0.7"/>
<path d="M732.67,107.79999999999995V274.60" stroke="#252525" stroke-width="0.7"/><polyline points="143.1,137.15 145.25,137.15 145.25,146.90 148.1,146.90 148.1,153.80 152.75,153.80 152.75,163.15 154,163.15 154,166.65 160.6,166.65 160.6,180.00 164.4,180.00 164.4,186.30 166.9,186.30 166.9,189.40 168.1,189.40 168.1,192.90 174.4,192.90 174.4,202.50 181.9,202.50 181.9,212.30 188.5,212.30 188.5,218.80 190.6,218.80 190.6,221.60 195.1,221.60 195.1,228.30 201.8,228.30 201.8,235.00 207.7,235.00 207.7,241.70 215.3,241.70 215.3,248.40 221.6,248.40 221.6,251.10 228.3,251.10 228.3,254.50 232.3,254.50 232.3,257.90 235.4,257.90 235.4,261.50 242.2,261.50 242.2,264.90 248.7,264.90 248.7,267.90 255.5,267.90 255.5,264.90 262.2,264.90 262.2,267.90 275.3,267.90 275.3,252.50 277.4,252.50 277.4,242.10 279.4,242.10 279.4,231.70 282,231.70 282,219.60 284,219.60 284,215.50 286.1,215.50 286.1,208.80 289.4,208.80 289.4,200.00 292.8,200.00 292.8,190.00 295.5,190.00 295.5,186.60 300.2,186.60 300.2,173.20 308.2,173.20 308.2,163.80 308.9,163.80 308.9,160.40 311.6,160.40 311.6,157.00 316.3,157.00 316.3,150.60 322.7,150.60 322.7,143.90 329.7,143.90 329.7,140.20 332.4,140.20 332.4,136.90 349.2,136.90 349.2,130.80 358.6,130.80 358.6,140.20 361.3,140.20 361.3,150.30 369.4,150.30 369.4,140.20 371.4,140.20 371.4,127.60 376,127.60 376,124.30 379.1,124.30 379.1,117.50 382.8,117.50 382.8,114.40 396.2,114.40 396.2,117.50 402.9,117.50 402.9,120.60 409.7,120.60 409.7,124.30 423.1,124.30 423.1,127.60 426.5,127.60 426.5,137.70 427.8,137.70 427.8,143.80 429.1,143.80 429.1,140.40 436.5,140.40 436.5,134.10 443.3,134.10 443.3,127.60 450,127.60 450,124.30 456.7,124.30 456.7,120.60 459.4,120.60 459.4,134.10 463.4,134.10 463.4,137.70 466.1,137.70 466.1,146.80 470.5,146.80 470.5,156.80 476.5,156.80 476.5,166.80 483.4,166.80 483.4,170.00 490.3,170.00 490.3,172.90 496.8,172.90 496.8,170.00 503.2,170.00 503.2,172.90 516.8,172.90 516.8,176.50 530.6,176.50 530.6,179.70 537.1,179.70 537.1,182.90 557.3,182.90 557.3,189.90 563.7,189.90 563.7,179.70 571,179.70 571,176.50 573.4,176.50 573.4,186.10 577.5,186.10 577.5,176.60 590.6,176.60 590.6,186.00 595.6,186.00 595.6,176.60 597.6,176.60 597.6,173.50 600.5,173.50 600.5,164.40 602.9,164.40 602.9,160.60 606.9,160.60 606.9,172.90 610.9,172.90 610.9,169.90 617.8,169.90 617.8,160.60 626.2,160.60 626.2,169.90 631.1,169.90 631.1,163.90 637.7,163.90 637.7,157.50 644,157.50 644,154.20 646.8,154.20 646.8,163.90 657.6,163.90 657.6,153.90 664.3,153.90 664.3,150.60 670.3,150.60 670.3,160.30 677.6,160.30 677.6,156.90 684.2,156.90 684.2,153.90 689.7,153.90 689.7,163.50 697.5,163.50 697.5,153.90 704.5,153.90 704.5,160.30 717.8,160.30 717.8,156.90 721.1,156.90 721.1,166.60 731.4,166.60 731.4,156.90 734.4,156.90" fill="none" stroke="#44739e" stroke-width="0.9"/></svg><div class="t" style="left:110px;width:28.5px;text-align:right;top:105.50px;font-size:5.8px;line-height:5.8px;color:#9b9b9b;-webkit-text-stroke:0.08px #9b9b9b">19</div>
<div class="t" style="left:110px;width:28.5px;text-align:right;top:138.18px;font-size:5.8px;line-height:5.8px;color:#9b9b9b;-webkit-text-stroke:0.08px #9b9b9b">18</div>
<div class="t" style="left:110px;width:28.5px;text-align:right;top:170.86px;font-size:5.8px;line-height:5.8px;color:#9b9b9b;-webkit-text-stroke:0.08px #9b9b9b">17</div>
<div class="t" style="left:110px;width:28.5px;text-align:right;top:203.54px;font-size:5.8px;line-height:5.8px;color:#9b9b9b;-webkit-text-stroke:0.08px #9b9b9b">16</div>
<div class="t" style="left:110px;width:28.5px;text-align:right;top:236.22px;font-size:5.8px;line-height:5.8px;color:#9b9b9b;-webkit-text-stroke:0.08px #9b9b9b">15</div>
<div class="t" style="left:110px;width:28.5px;text-align:right;top:268.90px;font-size:5.8px;line-height:5.8px;color:#9b9b9b;-webkit-text-stroke:0.08px #9b9b9b">14</div>
<div class="t" style="left:127.85px;width:30px;text-align:center;top:277.50px;font-size:5.4px;line-height:5.6px;-webkit-text-stroke:0.08px #9b9b9b;color:#cfcfcf;font-weight:700">Dec 4</div>
<div class="t" style="left:154.66px;width:30px;text-align:center;top:277.50px;font-size:5.4px;line-height:5.6px;-webkit-text-stroke:0.08px #9b9b9b;color:#9b9b9b;font-weight:400">02:00</div>
<div class="t" style="left:181.47px;width:30px;text-align:center;top:277.50px;font-size:5.4px;line-height:5.6px;-webkit-text-stroke:0.08px #9b9b9b;color:#9b9b9b;font-weight:400">04:00</div>
<div class="t" style="left:208.28px;width:30px;text-align:center;top:277.50px;font-size:5.4px;line-height:5.6px;-webkit-text-stroke:0.08px #9b9b9b;color:#9b9b9b;font-weight:400">06:00</div>
<div class="t" style="left:235.09px;width:30px;text-align:center;top:277.50px;font-size:5.4px;line-height:5.6px;-webkit-text-stroke:0.08px #9b9b9b;color:#9b9b9b;font-weight:400">08:00</div>
<div class="t" style="left:261.90px;width:30px;text-align:center;top:277.50px;font-size:5.4px;line-height:5.6px;-webkit-text-stroke:0.08px #9b9b9b;color:#9b9b9b;font-weight:400">10:00</div>
<div class="t" style="left:288.71px;width:30px;text-align:center;top:277.50px;font-size:5.4px;line-height:5.6px;-webkit-text-stroke:0.08px #9b9b9b;color:#9b9b9b;font-weight:400">12:00</div>
<div class="t" style="left:315.52px;width:30px;text-align:center;top:277.50px;font-size:5.4px;line-height:5.6px;-webkit-text-stroke:0.08px #9b9b9b;color:#9b9b9b;font-weight:400">14:00</div>
<div class="t" style="left:342.33px;width:30px;text-align:center;top:277.50px;font-size:5.4px;line-height:5.6px;-webkit-text-stroke:0.08px #9b9b9b;color:#9b9b9b;font-weight:400">16:00</div>
<div class="t" style="left:369.14px;width:30px;text-align:center;top:277.50px;font-size:5.4px;line-height:5.6px;-webkit-text-stroke:0.08px #9b9b9b;color:#9b9b9b;font-weight:400">18:00</div>
<div class="t" style="left:395.95px;width:30px;text-align:center;top:277.50px;font-size:5.4px;line-height:5.6px;-webkit-text-stroke:0.08px #9b9b9b;color:#9b9b9b;font-weight:400">20:00</div>
<div class="t" style="left:422.76px;width:30px;text-align:center;top:277.50px;font-size:5.4px;line-height:5.6px;-webkit-text-stroke:0.08px #9b9b9b;color:#9b9b9b;font-weight:400">22:00</div>
<div class="t" style="left:449.57px;width:30px;text-align:center;top:277.50px;font-size:5.4px;line-height:5.6px;-webkit-text-stroke:0.08px #9b9b9b;color:#cfcfcf;font-weight:700">Dec 5</div>
<div class="t" style="left:476.38px;width:30px;text-align:center;top:277.50px;font-size:5.4px;line-height:5.6px;-webkit-text-stroke:0.08px #9b9b9b;color:#9b9b9b;font-weight:400">02:00</div>
<div class="t" style="left:503.19px;width:30px;text-align:center;top:277.50px;font-size:5.4px;line-height:5.6px;-webkit-text-stroke:0.08px #9b9b9b;color:#9b9b9b;font-weight:400">04:00</div>
<div class="t" style="left:530.00px;width:30px;text-align:center;top:277.50px;font-size:5.4px;line-height:5.6px;-webkit-text-stroke:0.08px #9b9b9b;color:#9b9b9b;font-weight:400">06:00</div>
<div class="t" style="left:556.81px;width:30px;text-align:center;top:277.50px;font-size:5.4px;line-height:5.6px;-webkit-text-stroke:0.08px #9b9b9b;color:#9b9b9b;font-weight:400">08:00</div>
<div class="t" style="left:583.62px;width:30px;text-align:center;top:277.50px;font-size:5.4px;line-height:5.6px;-webkit-text-stroke:0.08px #9b9b9b;color:#9b9b9b;font-weight:400">10:00</div>
<div class="t" style="left:610.43px;width:30px;text-align:center;top:277.50px;font-size:5.4px;line-height:5.6px;-webkit-text-stroke:0.08px #9b9b9b;color:#9b9b9b;font-weight:400">12:00</div>
<div class="t" style="left:637.24px;width:30px;text-align:center;top:277.50px;font-size:5.4px;line-height:5.6px;-webkit-text-stroke:0.08px #9b9b9b;color:#9b9b9b;font-weight:400">14:00</div>
<div class="t" style="left:664.05px;width:30px;text-align:center;top:277.50px;font-size:5.4px;line-height:5.6px;-webkit-text-stroke:0.08px #9b9b9b;color:#9b9b9b;font-weight:400">16:00</div>
<div class="t" style="left:690.86px;width:30px;text-align:center;top:277.50px;font-size:5.4px;line-height:5.6px;-webkit-text-stroke:0.08px #9b9b9b;color:#9b9b9b;font-weight:400">18:00</div>
<div class="t" style="left:717.67px;width:30px;text-align:center;top:277.50px;font-size:5.4px;line-height:5.6px;-webkit-text-stroke:0.08px #9b9b9b;color:#9b9b9b;font-weight:400">20:00</div>
<div class="t" style="left:122.6px;top:192.70px;font-size:6.4px;line-height:6.4px;color:#a0a0a0;-webkit-text-stroke:0.1px #a0a0a0;transform:rotate(-90deg);transform-origin:0 0">°C</div>
</div>
</body></html>
